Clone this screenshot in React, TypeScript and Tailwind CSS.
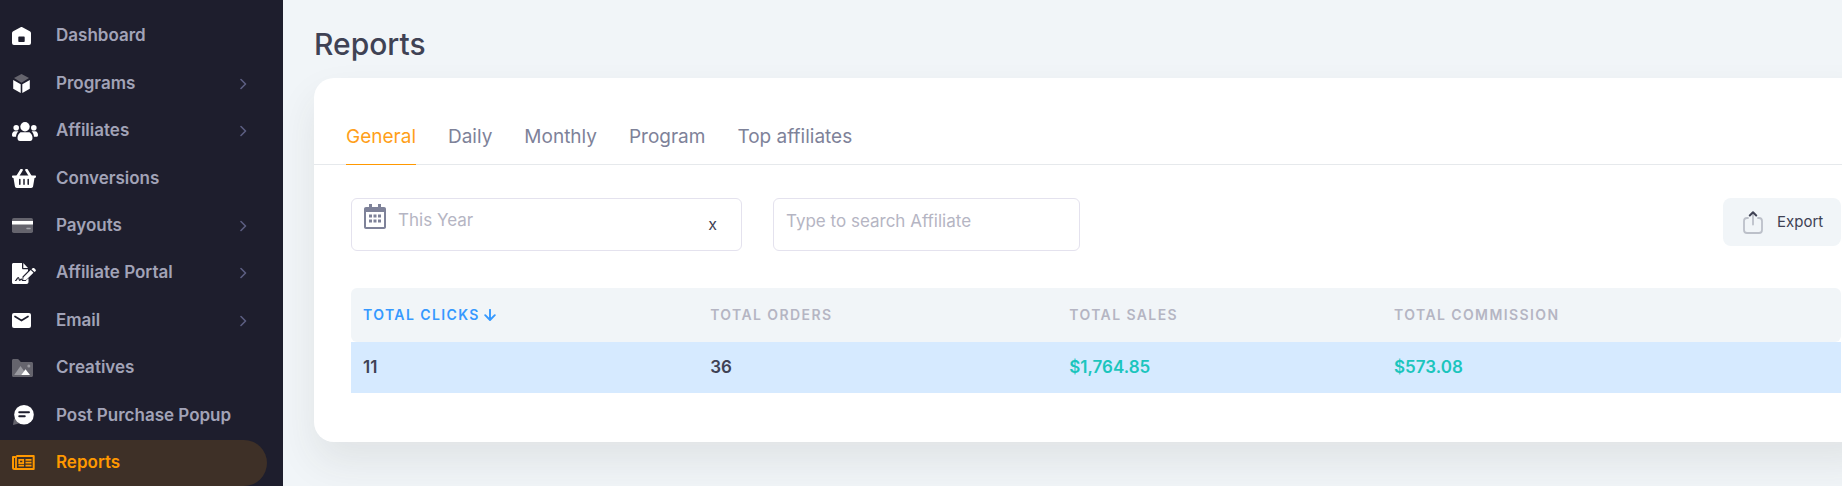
import { useState, type ReactNode } from "react";

type NavItem = { label: string; icon: ReactNode; expandable?: boolean; active?: boolean };

const HomeIcon = () => (
  <svg width="19" height="18" viewBox="0 0 19 18" fill="#fff" aria-hidden="true">
    <path fillRule="evenodd" d="M0 6.300c0-.9.400-1.600 1.200-2L8.600.3c.6-.3 1.200-.3 1.800 0l7.400 4c.8.400 1.200 1.100 1.200 2V16a2 2 0 0 1-2 2H2a2 2 0 0 1-2-2zM6.300 10.500V14c0 .6.400 1 1 1h4.400c.6 0 1-.4 1-1v-3.500c0-.6-.4-1-1-1H7.300c-.6 0-1 .4-1 1z" />
  </svg>
);

const BoxIcon = () => (
  <svg width="19" height="19" viewBox="0 0 19 19" aria-hidden="true">
    <path d="M9.500 0 17 4 9.500 8.700 2 4z" fill="#65646d" />
    <path d="M1.200 6 8.700 10.300V19L1.200 14.700zM17.800 6l-7.500 4.300V19l7.500-4.300z" fill="#fff" />
  </svg>
);

const UsersIcon = () => (
  <svg width="26" height="19" viewBox="0 0 26 19" fill="#fff" aria-hidden="true">
    <circle cx="13" cy="4.700" r="4.700" />
    <circle cx="4.200" cy="5.800" r="2.800" />
    <circle cx="21.800" cy="5.800" r="2.800" />
    <path d="M8.500 10.200h9c2 1.300 3 3.500 3 5.800 0 1.900-.9 3-2.500 3H8c-1.600 0-2.500-1.100-2.500-3 0-2.300 1-4.500 3-5.800zM2.800 9.200h3.600C4.800 10.800 4.200 12.600 4 14.800H1.500C.5 14.800 0 14 0 13c0-2 1-3.800 2.800-3.800zM23.200 9.200h-3.600c1.600 1.600 2.200 3.400 2.400 5.600h2.500c1 0 1.500-.8 1.500-1.800 0-2-1-3.800-2.800-3.800z" />
  </svg>
);

const BasketIcon = () => (
  <svg width="24" height="19" viewBox="0 0 24 19" aria-hidden="true">
    <path d="m9.500 1-4.300 7M14.500 1l4.300 7" stroke="#fff" strokeWidth="2.600" strokeLinecap="round" />
    <path d="M1 6.500h22c.6 0 1 .4 1 1s-.4 1.500-1 1.500h-.5l-1.400 8.300c-.2 1-.9 1.700-1.900 1.700H4.800c-1 0-1.700-.7-1.900-1.700L1.500 9H1C.4 9 0 8.100 0 7.500s.4-1 1-1z" fill="#fff" />
    <path d="M7.800 10.500v4.800M12 10.500v4.800M16.200 10.500v4.800" stroke="#1e1e2d" strokeWidth="1.500" strokeLinecap="round" />
  </svg>
);

const CardIcon = () => (
  <svg width="21" height="15" viewBox="0 0 21 15" aria-hidden="true">
    <rect width="21" height="15" rx="1.800" fill="#65646d" />
    <path d="M0 3h21v3.500H0z" fill="#fff" />
    <path d="M15 10.500h3" stroke="#a5a5ab" strokeWidth="1.500" strokeLinecap="round" />
  </svg>
);

const ContractIcon = () => (
  <svg width="24" height="21" viewBox="0 0 24 21" aria-hidden="true">
    <path d="M1.500 0H10v5c0 .8.500 1.300 1.300 1.300H16V8l-5.500 5.500v4H14l2.500-2.200V19c0 1.200-.8 2-2 2H1.500C.6 21 0 20.400 0 19.500v-18C0 .6.600 0 1.500 0zM11.300 0 16 5h-4.700z" fill="#fff" />
    <path d="m11.500 14.200 7.200-7.200 2.800 2.800-7.200 7-3.200.6zM19.500 6.200l1-.9c.6-.5 1.300-.5 1.800 0l1.200 1.200c.5.500.5 1.200 0 1.800l-1 .8z" fill="#fff" />
    <path d="M3.500 17.500c1.300 0 1.700-3 2.700-3s.6 2.800 1.600 2.800.7-1.300 1.500-1.300.6 1.500 1.700 1.500h2.500" fill="none" stroke="#1e1e2d" strokeWidth="1.200" strokeLinecap="round" />
  </svg>
);

const MailIcon = () => (
  <svg width="19" height="15" viewBox="0 0 19 15" aria-hidden="true">
    <rect width="19" height="15" rx="2" fill="#fff" />
    <path d="m3 3.500 6.500 4L16 3.500" fill="none" stroke="#1e1e2d" strokeWidth="1.700" strokeLinecap="round" />
  </svg>
);

const FolderImageIcon = () => (
  <svg width="21" height="18" viewBox="0 0 21 18" aria-hidden="true">
    <path d="M1.500 0h4c.6 0 1 .2 1.400.7L8.800 3h10.700c.9 0 1.500.6 1.500 1.500v12c0 .9-.6 1.500-1.500 1.500h-18C.6 18 0 17.400 0 16.500v-15C0 .6.600 0 1.500 0z" fill="#65646d" />
    <path d="m2.200 16 6.300-9 3.700 5.300L10 16z" fill="#9a9aa0" />
    <path d="m9.300 16 4.200-5.700L18 16z" fill="#fff" />
    <circle cx="16.800" cy="7" r="1.500" fill="#9a9aa0" />
  </svg>
);

const ChatIcon = () => (
  <svg width="22" height="20" viewBox="0 0 22 20" aria-hidden="true">
    <path d="M2 13.500 1 20l7-1.800z" fill="#65646d" />
    <circle cx="12" cy="9.800" r="9.800" fill="#fff" />
    <path d="M7.200 7.300h9.800M7.200 11.300h5.600" stroke="#1e1e2d" strokeWidth="1.900" strokeLinecap="round" />
  </svg>
);

const NewsIcon = () => (
  <svg width="23" height="15" viewBox="0 0 23 15" fill="none" stroke="#ff9800" aria-hidden="true">
    <path d="M4.300 1h17.400v13H2.500C1.500 14 1 13.500 1 12.500V2h2.500" strokeWidth="2" strokeLinejoin="round" />
    <path d="M4 1v12" strokeWidth="1.800" />
    <path d="M7.200 4.800h4v3.400h-4z" strokeWidth="1.700" />
    <path d="M13.500 4.800h6M13.500 7.700h6M13.500 10.700h6M6.500 10.700h5.500" strokeWidth="1.700" />
  </svg>
);

const ChevronIcon = () => (
  <svg width="7" height="12" viewBox="0 0 7 12" fill="none" stroke="#5c5e81" strokeWidth="1.600" aria-hidden="true">
    <path d="m1 1.500 4.500 4.500L1 10.500" strokeLinecap="round" strokeLinejoin="round" />
  </svg>
);

const CalendarIcon = () => (
  <svg width="22" height="25" viewBox="0 0 22 25" aria-hidden="true">
    <path fill="#7e8299" fillRule="evenodd" d="M5 0h3v3h6V0h3v3h3c1.200 0 2 .8 2 2v18c0 1.200-.8 2-2 2H2c-1.200 0-2-.8-2-2V5c0-1.200.8-2 2-2h3zM2 8v15h18V8z" />
    <path fill="#7e8299" d="M5 10.500h3v3H5zM9.500 10.500h3v3h-3zM14 10.500h3v3h-3zM5 15.500h3v3H5zM9.500 15.500h3v3h-3zM14 15.500h3v3h-3z" />
  </svg>
);

const ShareIcon = () => (
  <svg width="20" height="23" viewBox="0 0 20 23" fill="none" strokeWidth="1.800" strokeLinecap="round" aria-hidden="true">
    <path d="M5 7H4a3 3 0 0 0-3 3v9a3 3 0 0 0 3 3h12a3 3 0 0 0 3-3v-9a3 3 0 0 0-3-3h-1M10 2v11.500" stroke="#bcc0c9" />
    <path d="M6.800 4.500 10 1.300l3.200 3.200" stroke="#3f4254" strokeWidth="2" strokeLinejoin="round" />
  </svg>
);

const SortArrowIcon = () => (
  <svg width="12" height="12" viewBox="0 0 12 12" fill="none" stroke="currentColor" strokeWidth="1.900" aria-hidden="true">
    <path d="M6 .8v10M1.200 6.200 6 11l4.800-4.800" strokeLinecap="round" strokeLinejoin="round" />
  </svg>
);

const navItems: NavItem[] = [
  { label: "Dashboard", icon: <HomeIcon /> },
  { label: "Programs", icon: <BoxIcon />, expandable: true },
  { label: "Affiliates", icon: <UsersIcon />, expandable: true },
  { label: "Conversions", icon: <BasketIcon /> },
  { label: "Payouts", icon: <CardIcon />, expandable: true },
  { label: "Affiliate Portal", icon: <ContractIcon />, expandable: true },
  { label: "Email", icon: <MailIcon />, expandable: true },
  { label: "Creatives", icon: <FolderImageIcon /> },
  { label: "Post Purchase Popup", icon: <ChatIcon /> },
  { label: "Reports", icon: <NewsIcon />, active: true },
];

const tabs = ["General", "Daily", "Monthly", "Program", "Top affiliates"];

function Sidebar() {
  return (
    <nav className="flex min-h-screen w-[283px] shrink-0 flex-col bg-[#1e1e2d] pt-3 pr-4">
      {navItems.map((item) => (
        <div key={item.label} className="flex max-h-12 min-h-[46px] flex-1 flex-col pt-px">
          <a
            href="#"
            className={
              item.active
                ? "flex flex-1 items-center rounded-r-full bg-[#3e3027] pr-5 pl-3 text-[17px] font-semibold text-[#ff9800]"
                : "flex flex-1 items-center pr-5 pl-3 text-[17px] font-semibold text-[#a2a3b7]"
            }
          >
            <span className="flex w-11 shrink-0 items-center">{item.icon}</span>
            <span className="flex-1 whitespace-nowrap">{item.label}</span>
            {item.expandable && <ChevronIcon />}
          </a>
        </div>
      ))}
    </nav>
  );
}

export default function App() {
  const [tab, setTab] = useState("General");
  return (
    <div className="flex min-h-screen overflow-hidden bg-[#f1f5f8] font-[Inter,sans-serif] text-[#3f4254]">
      <Sidebar />
      <main className="min-w-0 flex-1 pt-6 pl-[31px]">
        <h1 className="text-[30px] leading-10 font-medium">Reports</h1>
        <section className="-mr-9 mt-[14px] rounded-[20px] bg-white pt-9 pb-[49px] shadow-[0_20px_40px_rgba(60,60,40,0.09)]">
          <div role="tablist" className="flex gap-8 border-b border-[#e6e9ec] px-8">
            {tabs.map((name) => (
              <button
                key={name}
                role="tab"
                aria-selected={tab === name}
                onClick={() => setTab(name)}
                className={
                  tab === name
                    ? "-mb-px border-b border-[#ff9800] pt-[9px] pb-[13px] text-[19px] leading-7 text-[#ff9f1a]"
                    : "-mb-px border-b border-transparent pt-[9px] pb-[13px] text-[19px] leading-7 text-[#7e8299]"
                }
              >
                {name}
              </button>
            ))}
          </div>
          <div className="px-[37px] pt-[33px]">
            <div className="flex items-start">
              <div className="flex h-[53px] w-[391px] items-start rounded-md border border-[#e4e2ee] pt-[5px] pr-6 pl-3">
                <CalendarIcon />
                <input
                  aria-label="Date range"
                  placeholder="This Year"
                  className="ml-3 min-w-0 flex-1 pt-1 text-[17px] leading-6 outline-none placeholder:text-[#b5b5c3]"
                />
                <button aria-label="Clear date range" className="pt-2 text-base leading-6">x</button>
              </div>
              <input
                aria-label="Search affiliate"
                placeholder="Type to search Affiliate"
                className="ml-[31px] h-[53px] w-[307px] rounded-md border border-[#e4e2ee] pb-[7px] pl-3 text-[17px] outline-none placeholder:text-[#b5b5c3]"
              />
              <button className="ml-auto flex h-12 w-[118px] items-center rounded-lg bg-[#f1f5f8] pl-5 text-[15px]">
                <ShareIcon />
                <span className="ml-[14px]">Export</span>
              </button>
            </div>
            <table className="mt-[37px] w-full table-fixed border-collapse text-left">
              <colgroup>
                <col className="w-[23.3%]" />
                <col className="w-[24.1%]" />
                <col className="w-[21.8%]" />
                <col />
              </colgroup>
              <thead>
                <tr className="h-[54px] text-sm font-semibold tracking-widest text-[#b5b5c3]">
                  <th scope="col" aria-sort="descending" className="rounded-l-md bg-[#f1f5f8] pl-3 font-semibold text-[#3699ff]">
                    <button className="flex items-center gap-1 tracking-widest">
                      TOTAL CLICKS <SortArrowIcon />
                    </button>
                  </th>
                  <th scope="col" className="bg-[#f1f5f8] pl-3 font-semibold">TOTAL ORDERS</th>
                  <th scope="col" className="bg-[#f1f5f8] pl-3 font-semibold">TOTAL SALES</th>
                  <th scope="col" className="rounded-r-md bg-[#f1f5f8] pl-3 font-semibold">TOTAL COMMISSION</th>
                </tr>
              </thead>
              <tbody>
                <tr className="h-[51px] bg-[#d6eaff] text-[17px] font-semibold">
                  <td className="pl-3">11</td>
                  <td className="pl-3">36</td>
                  <td className="pl-3 text-[#1bc5bd]">$1,764.85</td>
                  <td className="pl-3 text-[#1bc5bd]">$573.08</td>
                </tr>
              </tbody>
            </table>
          </div>
        </section>
      </main>
    </div>
  );
}
